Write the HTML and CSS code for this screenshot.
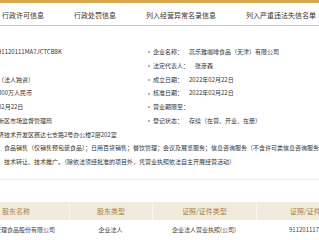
FILE: index.html
```html
<!DOCTYPE html>
<html lang="zh-CN">
<head>
    <meta charset="UTF-8">
    <title>企业信息</title>
    <link rel="stylesheet" href="styles.css">
</head>
<body>
    <!-- Tab bar -->
    <div class="tabs">
        <span class="tab">行政许可信息</span>
        <span class="sep"></span>
        <span class="tab">行政处罚信息</span>
        <span class="sep"></span>
        <span class="tab">列入经营异常名录信息</span>
        <span class="sep"></span>
        <span class="tab">列入严重违法失信名单（黑名单）信息</span>
    </div>

    <!-- Basic info -->
    <div class="info">
        <div class="cell">91120111MA7JCTCB8K</div>
        <div class="cell"><span class="dot"></span><span class="label">企业名称：</span><span class="value">高乐雅咖啡食品（天津）有限公司</span></div>
        <div class="cell">&nbsp;</div>
        <div class="cell"><span class="dot"></span><span class="label">法定代表人：</span><span class="value">张彦森</span></div>
        <div class="cell">（法人独资）</div>
        <div class="cell"><span class="dot"></span><span class="label">成立日期：</span><span class="value">2022年02月22日</span></div>
        <div class="cell">300万人民币</div>
        <div class="cell"><span class="dot"></span><span class="label">核准日期：</span><span class="value">2022年02月22日</span></div>
        <div class="cell">02月22日</div>
        <div class="cell"><span class="dot"></span><span class="label">营业期限至：</span></div>
        <div class="cell">新区市场监督管理局</div>
        <div class="cell"><span class="dot"></span><span class="label">登记状态：</span><span class="value">存续（在营、开业、在册）</span></div>
        <div class="cell wide">济技术开发区赛达七支路2号办公楼2层202室</div>
        <div class="cell wide">：食品销售（仅销售预包装食品）；日用百货销售；餐饮管理；会议及展览服务；信息咨询服务（不含许可类信息咨询服务）；</div>
        <div class="cell wide">、技术转让、技术推广。（除依法须经批准的项目外，凭营业执照依法自主开展经营活动）</div>
    </div>

    <!-- Shareholders -->
    <div class="table">
        <div class="th">股东名称</div>
        <div class="th">股东类型</div>
        <div class="th">证照/证件类型</div>
        <div class="th num">证照/证件号码</div>
        <div class="td">高乐雅管理食品股份有限公司</div>
        <div class="td">企业法人</div>
        <div class="td">企业法人营业执照(公司)</div>
        <div class="td num">91120111777734567X</div>
    </div>
</body>
</html>
```

FILE: styles.css
```css
body {
    margin: 0;
    width: 319px;
    height: 240px;
    overflow: hidden;
    background-color: #fff;
    font-family: "Noto Sans CJK SC", "Noto Sans", sans-serif;
    color: #333;
    white-space: nowrap;
}
.tabs {
    display: flex;
    align-items: center;
    height: 20px;
    padding-top: 2px;
    margin-left: -13px;
    border-top: 3px solid #d8a94c;
    border-bottom: 1px solid #e4c684;
    font-size: 7px;
    line-height: 18px;
}
.tab {
    padding: 0 15px;
    color: #333;
}
.sep {
    width: 1px;
    height: 7px;
    background-color: #ddd;
}
.info {
    display: grid;
    grid-template-columns: 150px 1fr;
    margin-left: -2px;
    padding: 19px 0 10px;
    border-bottom: 1px solid #eee;
    font-size: 6px;
    line-height: 13.75px;
}
.cell {
    overflow: hidden;
}
.cell.wide {
    grid-column: span 2;
}
.dot {
    display: inline-block;
    width: 2px;
    height: 2px;
    margin-right: 3px;
    border-radius: 50%;
    background-color: #999;
    vertical-align: middle;
}
.value {
    margin-left: 6px;
}
.table {
    display: grid;
    grid-template-columns: 106px 83px 104px 1fr;
    margin: 22px 0 0 -37px;
}
.th {
    height: 18px;
    line-height: 18px;
    font-size: 7px;
    text-align: center;
    color: #a8823f;
    background-color: #f2eadc;
    border-left: 1px solid #fbf7f0;
}
.th:first-child {
    border-left: none;
}
.td {
    height: 20px;
    line-height: 20px;
    font-size: 6px;
    text-align: center;
    color: #444;
    border-bottom: 1px solid #eee;
}
.num {
    text-align: left;
    padding-left: 33px;
}
```
